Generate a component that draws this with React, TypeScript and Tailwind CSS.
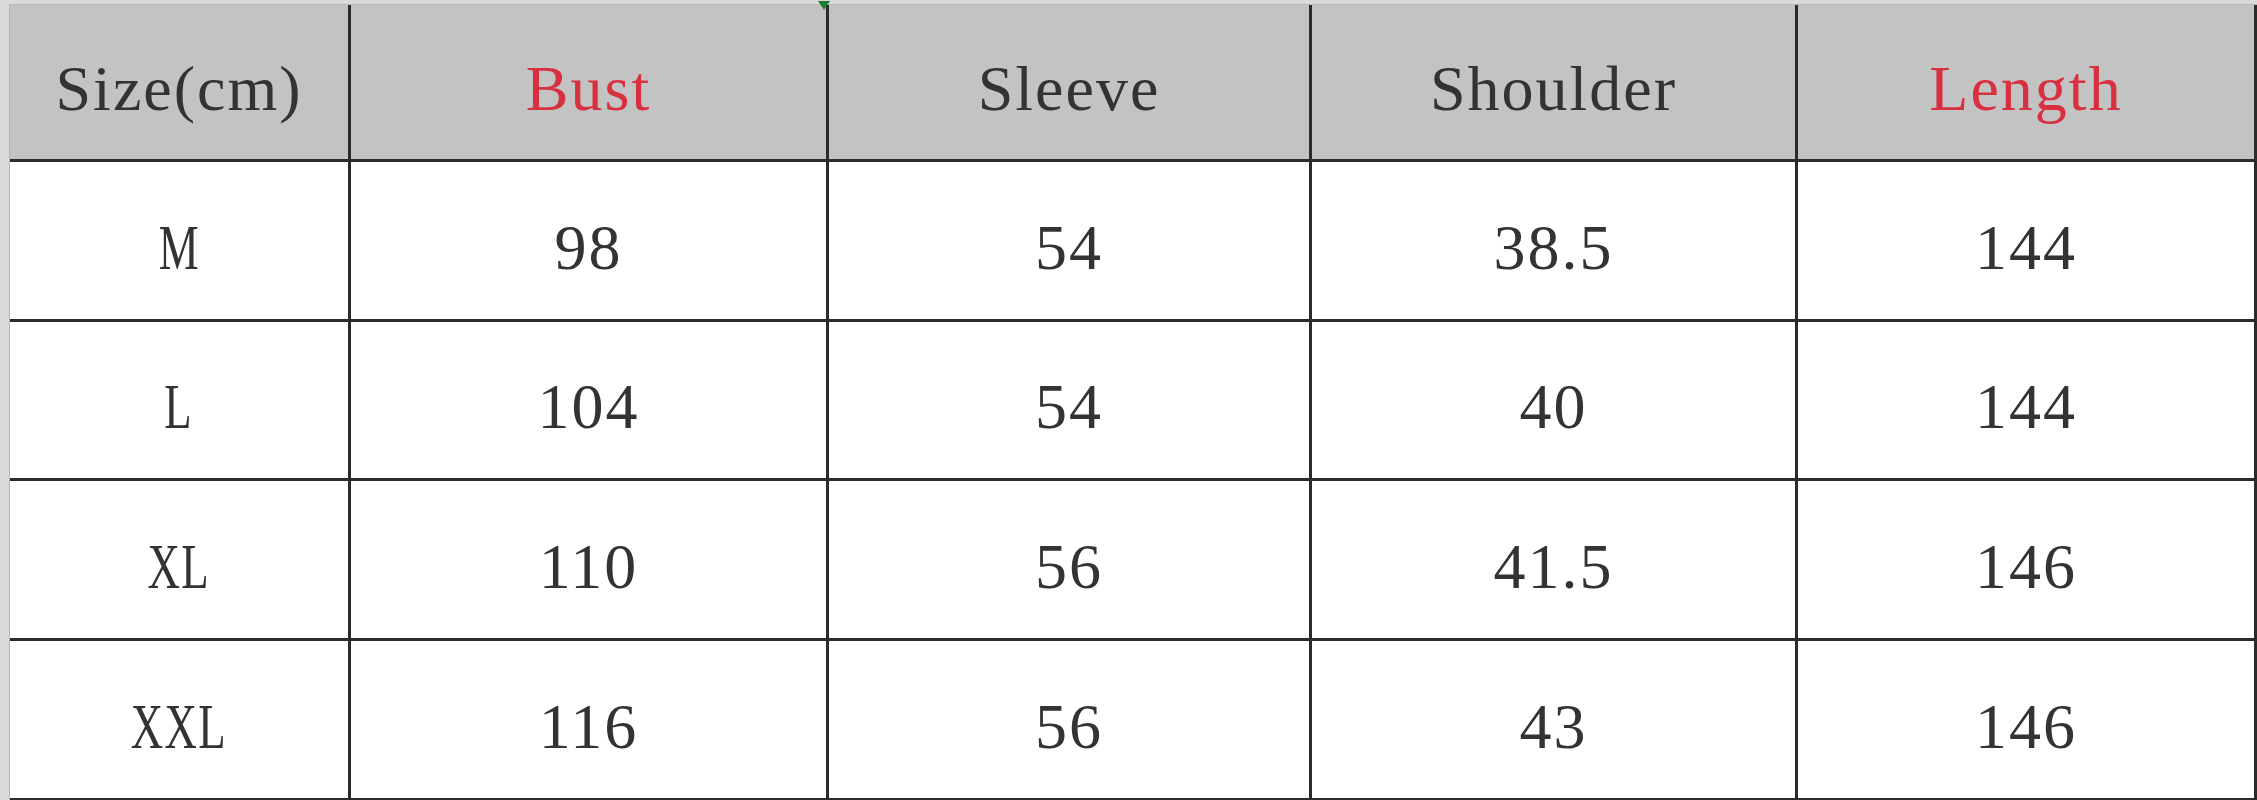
const headers = [
  { label: "Size(cm)", red: false },
  { label: "Bust", red: true },
  { label: "Sleeve", red: false },
  { label: "Shoulder", red: false },
  { label: "Length", red: true },
];

const rows = [
  ["M", "98", "54", "38.5", "144"],
  ["L", "104", "54", "40", "144"],
  ["XL", "110", "56", "41.5", "146"],
  ["XXL", "116", "56", "43", "146"],
];

export default function App() {
  return (
    <div className="w-[2257px] h-[800px] bg-[#dadada] pl-[9px] pt-[4px] font-['Liberation_Serif',serif] overflow-hidden">
      {/* Size chart grid — grey header, white body, dark cell rules */}
      <div className="grid grid-cols-[341px_478px_483px_486px_459px] grid-rows-[157px_160px_159px_160px_160px] border-l border-t border-l-[#b4b4b4] border-t-[#b9b9b9]">
        {headers.map((h, i) => (
          <div
            key={h.label}
            className={`relative flex items-center justify-center pt-[14px] bg-[#c3c3c3] border-r-[3px] border-b-[3px] border-[#2b2b2b] text-[64px] tracking-[2px] ${
              h.red ? "text-[#d8303f]" : "text-[#333333]"
            }`}
          >
            {h.label}
            {/* spreadsheet marker on the Bust/Sleeve rule */}
            {i === 1 && (
              <span className="absolute -top-[4px] -right-[4px] w-0 h-0 border-l-[6px] border-r-[6px] border-t-[9px] border-l-transparent border-r-transparent border-t-[#1f7a2e]" />
            )}
          </div>
        ))}
        {rows.map((r) =>
          r.map((v, i) => (
            <div
              key={r[0] + i}
              className="flex items-center justify-center pt-[14px] bg-white border-r-[3px] border-b-[3px] border-[#2b2b2b] text-[64px] tracking-[2px] text-[#333333]"
            >
              {/* size letters are narrow in the source font */}
              {i === 0 ? <span className="inline-block scale-x-70">{v}</span> : v}
            </div>
          ))
        )}
      </div>
    </div>
  );
}
